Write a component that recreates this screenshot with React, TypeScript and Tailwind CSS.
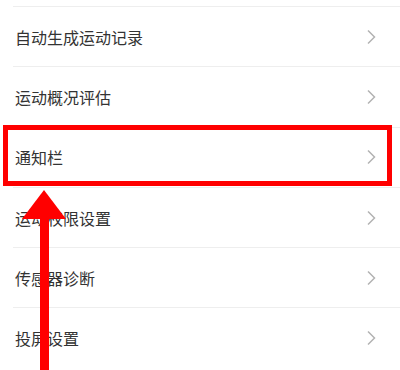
import React from "react";

const items = ["自动生成运动记录", "运动概况评估", "通知栏", "运动权限设置", "传感器诊断", "投屏设置"];

function Chevron() {
  return (
    <svg width="10" height="16" viewBox="0 0 10 16" className="shrink-0">
      <path d="M2 1.5 L8.5 8 L2 14.5" fill="none" stroke="#b3b3b3" strokeWidth="1.5" />
    </svg>
  );
}

export default function App() {
  return (
    <div
      className="relative w-[400px] h-[370px] overflow-hidden bg-white"
      style={{ fontFamily: '"Noto Sans CJK SC", "Noto Sans", sans-serif' }}
    >
      <div className="h-[6px]" />
      <div className="flex flex-col">
        {items.map((t) => (
          <div key={t} className="ml-[13px] border-t border-[#eeeeee] h-[60.3px] flex items-center justify-between pr-[24px]">
            <span className="pl-[2px] text-[16px] leading-none text-[#333333]">{t}</span>
            <Chevron />
          </div>
        ))}
      </div>
      <div className="absolute left-[3px] top-[125px] w-[389px] h-[61px] border-[5px] border-[#ff0000]" />
      <svg className="absolute left-0 top-0" width="400" height="370" viewBox="0 0 400 370">
        <rect x="40" y="214" width="9" height="160" fill="#ff0000" />
        <polygon points="44,190 22,219 66,219" fill="#ff0000" />
      </svg>
    </div>
  );
}
